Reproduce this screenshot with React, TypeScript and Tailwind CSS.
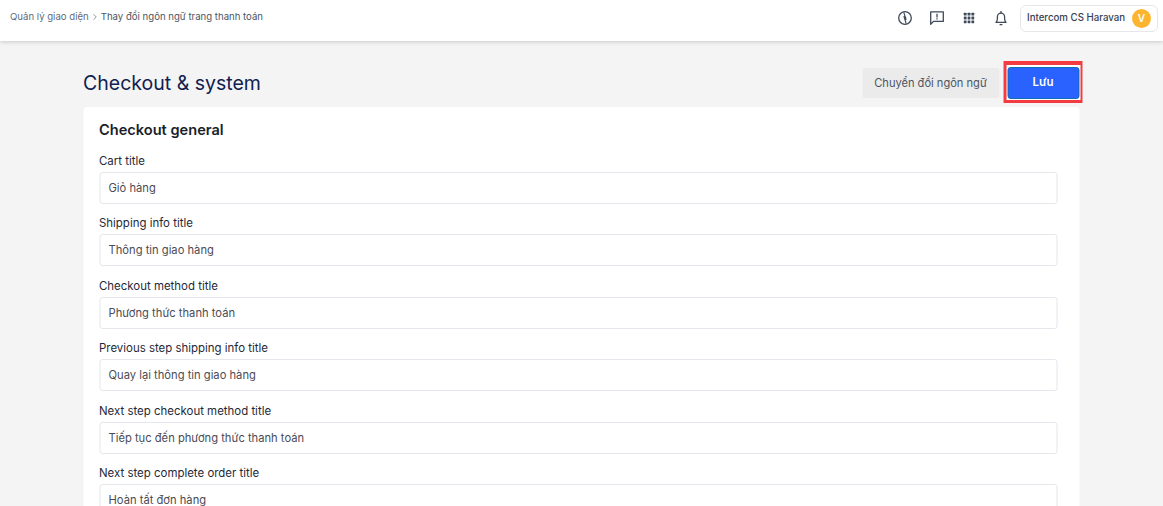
import { ChevronRight } from 'lucide-react'

const fields = [
  { label: 'Cart title', value: 'Giỏ hàng' },
  { label: 'Shipping info title', value: 'Thông tin giao hàng' },
  { label: 'Checkout method title', value: 'Phương thức thanh toán' },
  { label: 'Previous step shipping info title', value: 'Quay lại thông tin giao hàng' },
  { label: 'Next step checkout method title', value: 'Tiếp tục đến phương thức thanh toán' },
  { label: 'Next step complete order title', value: 'Hoàn tất đơn hàng' },
]

function TopIcons() {
  return (
    <div className="flex items-center gap-[16px] text-[#3f4a5a]">
      <svg width="16" height="16" viewBox="0 0 16 16" fill="none" stroke="currentColor" strokeWidth="1.3">
        <circle cx="8" cy="8" r="6.3" />
        <path d="M6.8 2.4 9 9.4 6.9 8.2M9.2 13.6 7 6.6 9.1 7.8" strokeLinejoin="round" strokeWidth="1.2" />
      </svg>
      <svg width="16" height="16" viewBox="0 0 16 16" fill="none" stroke="currentColor" strokeWidth="1.3">
        <path d="M1.7 1.8h12.6v9.6H4.6l-2.9 2.9z" strokeLinejoin="round" />
        <path d="M8 3.8v3.6M8 8.2v1.4" />
      </svg>
      <svg width="16" height="16" viewBox="0 0 16 16" fill="currentColor">
        {[2.8, 6.6, 10.4].map((y) =>
          [2.8, 6.6, 10.4].map((x) => <rect key={`${x}-${y}`} x={x} y={y} width="2.8" height="2.8" rx="0.4" />)
        )}
      </svg>
      <svg width="16" height="16" viewBox="0 0 16 16" fill="none" stroke="currentColor" strokeWidth="1.3">
        <path d="M3 12.4h10c-.9-1-1.4-2-1.4-3.6V6.8A3.6 3.6 0 0 0 8 3.2a3.6 3.6 0 0 0-3.6 3.6v2c0 1.6-.5 2.6-1.4 3.6z" strokeLinejoin="round" />
        <path d="M8 1v2.2M6.6 14.6h2.8" />
      </svg>
    </div>
  )
}

export default function App() {
  return (
    <div className="h-screen overflow-hidden bg-[#f4f4f4] font-['Inter',sans-serif]">
      <header className="flex h-[41px] items-center justify-between bg-white pl-[10px] pr-[5px] shadow-[0_1px_4px_rgba(0,0,0,0.18)]">
        <nav className="-mt-[6px] flex items-center text-[9.6px] text-[#4b5563]">
          <span className="text-[#5f6b7a]">Quản lý giao diện</span>
          <ChevronRight className="mx-[1px] size-[10px] text-[#7a8490]" />
          <span>Thay đổi ngôn ngữ trang thanh toán</span>
        </nav>
        <div className="-mt-[5px] flex items-center gap-[11px]">
          <TopIcons />
          <div className="flex h-[27px] w-[138px] items-center justify-between rounded-[6px] border border-[#e5e7eb] px-[6px]">
            <span className="text-[9.7px] font-medium whitespace-nowrap text-[#374151]">Intercom CS Haravan</span>
            <span className="flex size-[19px] items-center justify-center rounded-full bg-[#fdb52f] text-[10px] font-semibold text-white">V</span>
          </div>
        </div>
      </header>

      <main className="mx-auto w-[996px] -translate-x-[0.5px]">
        <div className="flex h-[66px] items-center justify-between pt-[18px]">
          <h1 className="pt-[2px] text-[19.5px] text-[#0f2150]">Checkout &amp; system</h1>
          <div className="-mr-[3px] flex items-center gap-[4px]">
            <button className="h-[30px] w-[137px] rounded-[3px] bg-[#ebebeb] pt-[1px] text-[11.1px] whitespace-nowrap text-[#4b5563]">Chuyển đổi ngôn ngữ</button>
            <div className="-mt-[2px] h-[42px] w-[79px] border-t-[4px] border-r-[2px] border-b-[3px] border-l-[3px] border-[#f23c42] bg-white pt-[2px] pl-[1px]">
              <button className="block h-[32px] w-[72px] rounded-[3px] border border-[#0f6fb5] bg-[#2962ff] text-[11.5px] font-semibold text-white">Lưu</button>
            </div>
          </div>
        </div>

        <section className="rounded-t-[4px] bg-white pl-[16px] pr-[22px] pt-[14px]">
          <h2 className="text-[14.6px] leading-[18px] font-semibold text-[#1a1f2b]">Checkout general</h2>
          <div className="mt-[14px] flex flex-col gap-[11.4px]">
            {fields.map((f) => (
              <div key={f.label}>
                <label className="block h-[19px] pt-[1px] text-[11.45px] leading-[14px] text-[#1f2937]">{f.label}</label>
                <div className="flex h-[32px] items-center rounded-[3px] border border-[#e4e7ec] bg-white px-[8.5px] pt-[1px] text-[11.2px] text-[#4b4b55]">
                  {f.value}
                </div>
              </div>
            ))}
          </div>
        </section>
      </main>
    </div>
  )
}
